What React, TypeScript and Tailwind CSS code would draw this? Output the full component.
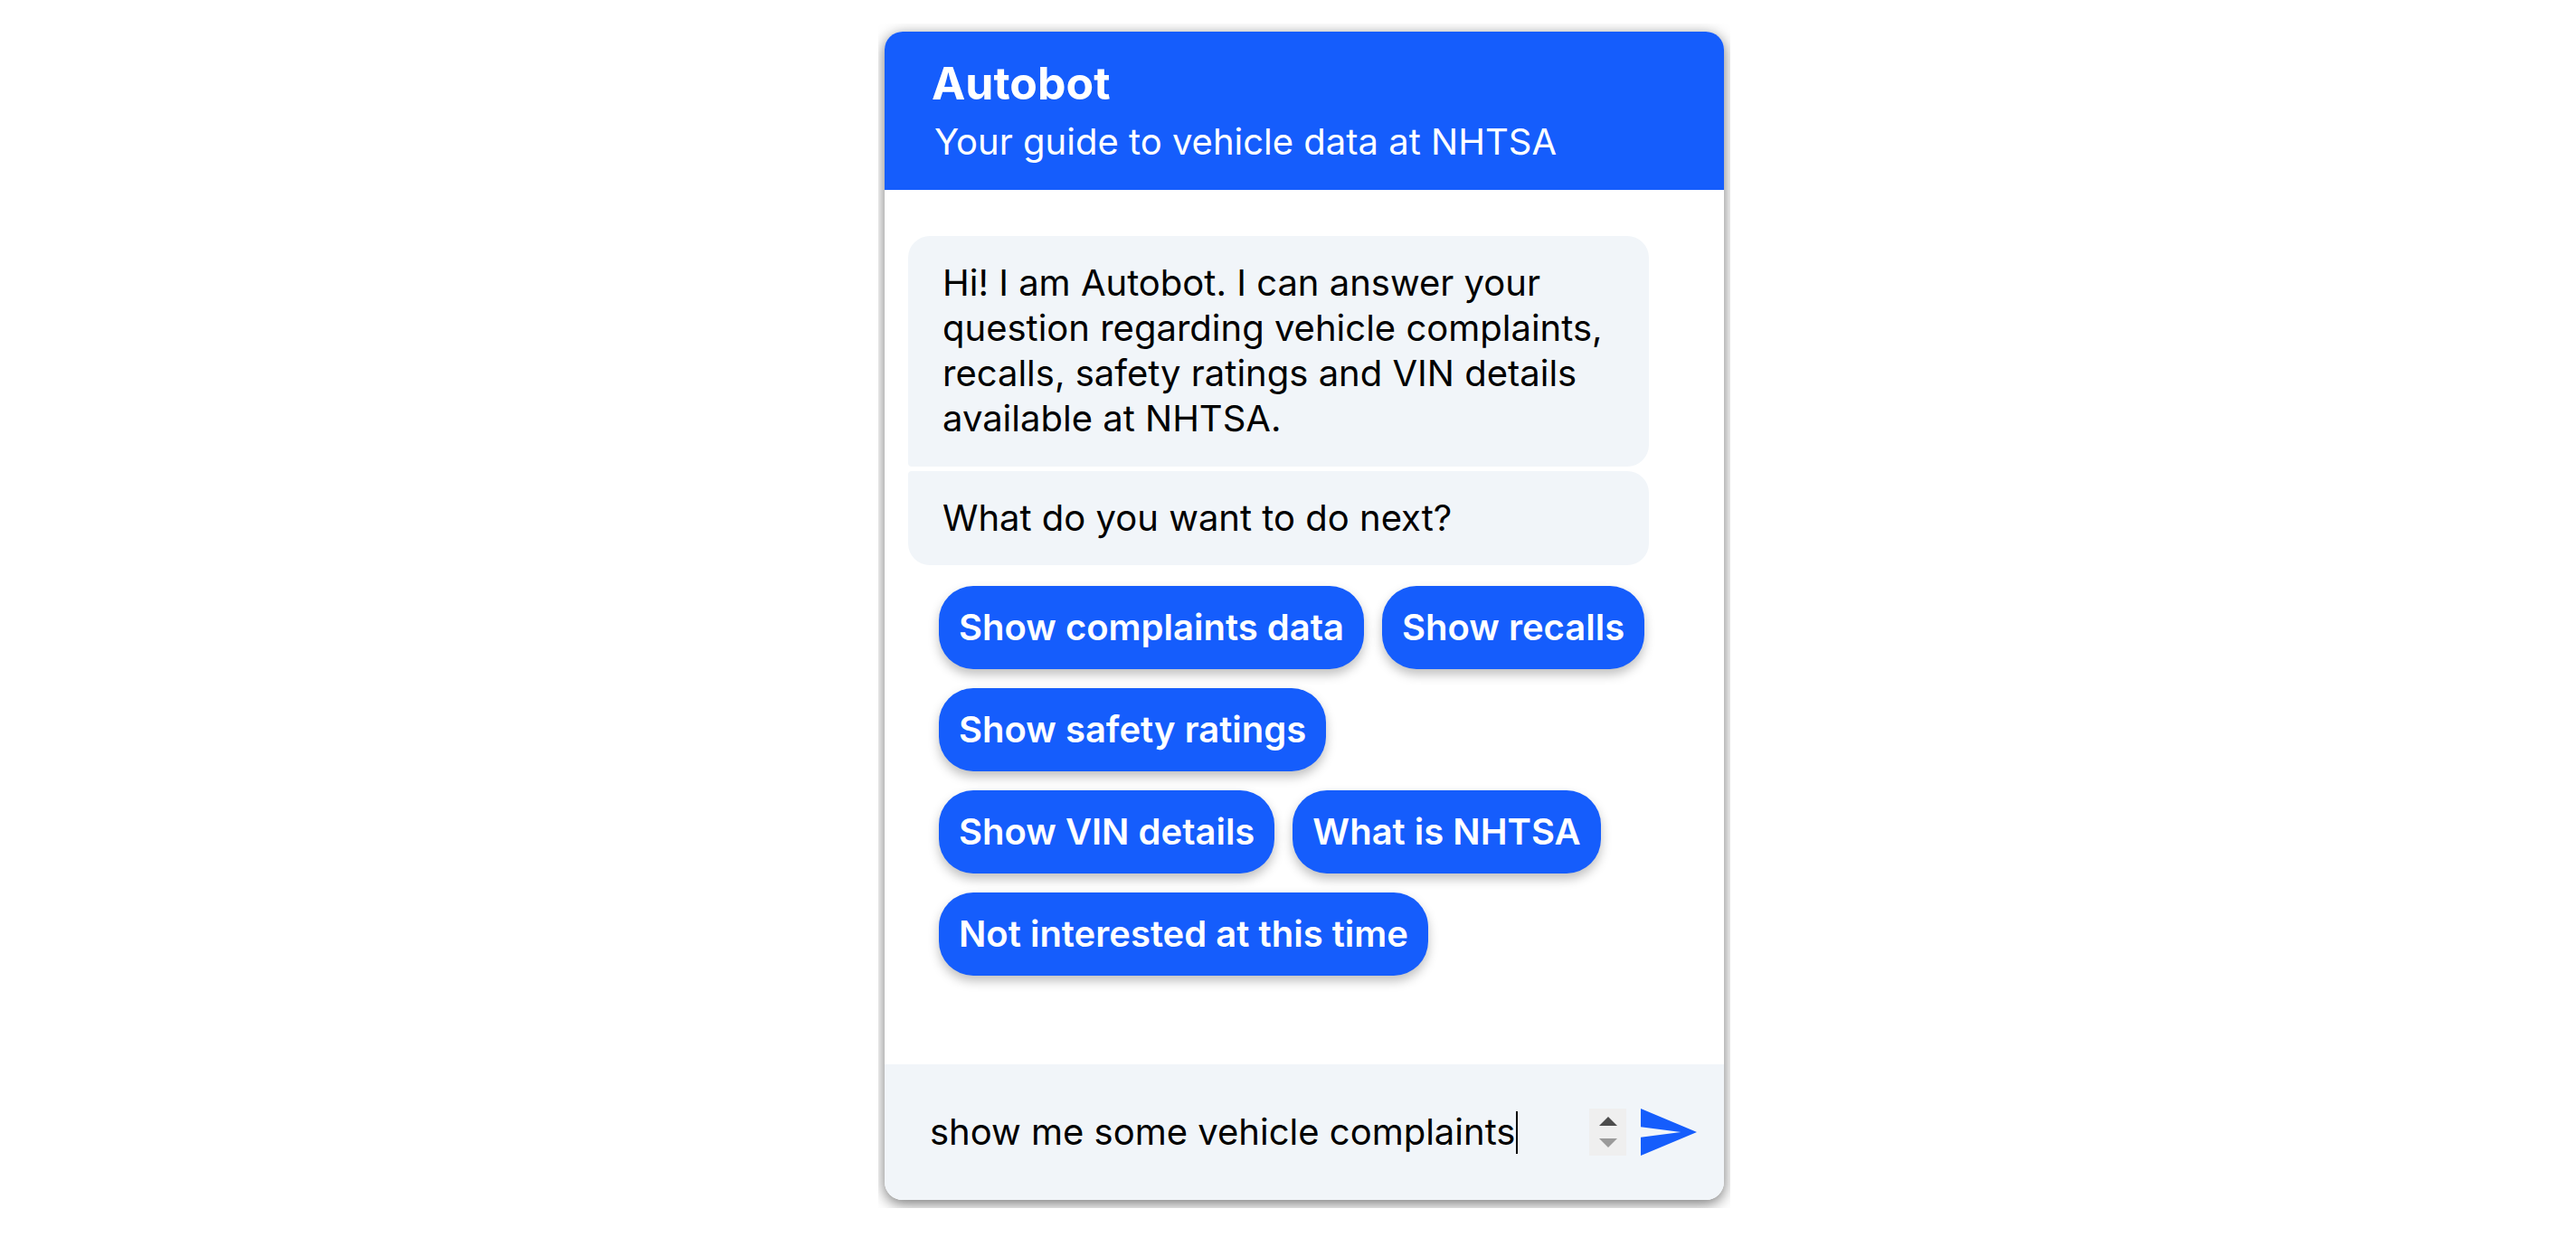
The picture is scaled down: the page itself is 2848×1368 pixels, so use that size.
import React from "react";

const options: string[][] = [
  ["Show complaints data", "Show recalls"],
  ["Show safety ratings"],
  ["Show VIN details", "What is NHTSA"],
  ["Not interested at this time"],
];

function SendIcon() {
  return (
    <svg width="62" height="52" viewBox="2 3 21 18" preserveAspectRatio="none" className="shrink-0">
      <path d="M2.01 21L23 12 2.01 3 2 10l15 2-15 2z" fill="#155dfc" />
    </svg>
  );
}

function Spinner() {
  return (
    <div className="flex h-[52px] w-[41px] shrink-0 flex-col items-center justify-center gap-[14px] bg-[#efefef]">
      <svg width="20" height="10" viewBox="0 0 20 10">
        <path d="M10 0L20 10H0z" fill="#4d4d4d" />
      </svg>
      <svg width="20" height="10" viewBox="0 0 20 10">
        <path d="M0 0H20L10 10z" fill="#9a9a9a" />
      </svg>
    </div>
  );
}

export default function App() {
  return (
    <div className="min-h-screen bg-white font-['Inter',sans-serif]">
      <div className="ml-[971px] w-[942px] overflow-hidden px-[7px] pt-[9px] pb-[9px] mt-[26px]">
        <div className="flex h-[1292px] flex-col overflow-hidden rounded-[20px] bg-white shadow-[0_4px_16px_rgba(0,0,0,0.55)]">
          {/* header */}
          <div className="h-[175px] shrink-0 bg-[#155dfc] pt-[27px]">
            <div className="pl-[52px] text-[50px] leading-[60px] font-bold text-white">Autobot</div>
            <div className="mt-[11px] pl-[55px] text-[40px] leading-[48px] text-white">
              Your guide to vehicle data at NHTSA
            </div>
          </div>

          {/* messages */}
          <div className="flex-1 pl-[26px] pt-[51px]">
            <div className="w-[819px] rounded-[24px] rounded-bl-[4px] bg-[#f1f5f9] pt-[27px] pb-[28px] pl-[38px] pr-[20px] text-[40px] leading-[50px] text-black">
              Hi! I am Autobot. I can answer your question regarding vehicle complaints, recalls, safety ratings and VIN
              details available at NHTSA.
            </div>
            <div className="mt-[5px] w-[819px] rounded-[24px] rounded-tl-[4px] bg-[#f1f5f9] py-[27px] pl-[38px] pr-[20px] text-[40px] leading-[50px] text-black">
              What do you want to do next?
            </div>
            <div className="ml-[34px] mt-[23px] flex w-[792px] flex-col gap-[21px]">
              {options.map((row, i) => (
                <div key={i} className="flex gap-[20px]">
                  {row.map((label) => (
                    <button
                      key={label}
                      className="h-[92px] rounded-[38px] bg-[#155dfc] px-[22px] text-[40px] leading-[48px] font-semibold text-white shadow-[0_6px_12px_rgba(0,0,0,0.25)]"
                    >
                      {label}
                    </button>
                  ))}
                </div>
              ))}
            </div>
          </div>

          {/* input */}
          <div className="flex h-[150px] shrink-0 items-center bg-[#f1f5f9] pl-[50px] pr-[30px]">
            <div className="flex flex-1 items-center text-[40px] leading-[48px] text-black">
              <span>show me some vehicle complaints</span>
              <span className="ml-[1px] h-[47px] w-[2px] bg-black" />
            </div>
            <Spinner />
            <div className="ml-[16px]">
              <SendIcon />
            </div>
          </div>
        </div>
      </div>
    </div>
  );
}
